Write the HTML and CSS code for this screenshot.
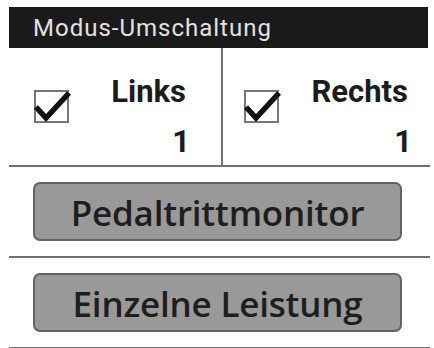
FILE: index.html
```html
<!DOCTYPE html>
<html lang="de">
<head>
<meta charset="utf-8">
<title>Modus-Umschaltung</title>
<link rel="stylesheet" href="styles.css">
</head>
<body>
<div class="screen">
  <div class="header">Modus-Umschaltung</div>
  <div class="sides">
    <div class="side side-left">
      <svg class="check" width="42" height="40" viewBox="0 0 42 40" aria-hidden="true">
        <rect x="2" y="3" width="33" height="31" fill="none" stroke="#777" stroke-width="2"/>
        <path d="M3 19 L13 30 L36 5" fill="none" stroke="#111" stroke-width="5.5" stroke-linejoin="miter"/>
      </svg>
      <div class="texts">
        <div class="label">Links</div>
        <div class="num">1</div>
      </div>
    </div>
    <div class="divider"></div>
    <div class="side side-right">
      <svg class="check" width="42" height="40" viewBox="0 0 42 40" aria-hidden="true">
        <rect x="2" y="3" width="33" height="31" fill="none" stroke="#777" stroke-width="2"/>
        <path d="M3 19 L13 30 L36 5" fill="none" stroke="#111" stroke-width="5.5" stroke-linejoin="miter"/>
      </svg>
      <div class="texts">
        <div class="label">Rechts</div>
        <div class="num">1</div>
      </div>
    </div>
  </div>
  <div class="btn-row"><div class="btn">Pedaltrittmonitor</div></div>
  <div class="btn-row"><div class="btn">Einzelne Leistung</div></div>
</div>
</body>
</html>
```
FILE: styles.css
```css
html, body {
  margin: 0;
  padding: 0;
  background: #ffffff;
}
.screen {
  width: 421px;
  margin-left: 9px;
  padding-top: 7px;
}
.header {
  width: 419px;
  height: 41px;
  box-sizing: border-box;
  padding-left: 24px;
  padding-top: 9px;
  background: #1b1a1a;
  color: #e2e2e2;
  font-family: Roboto, "Liberation Sans", sans-serif;
  font-weight: 400;
  font-size: 24px;
  line-height: 24px;
  letter-spacing: 1px;
}
.sides {
  display: flex;
  height: 117px;
  border-bottom: 2px solid #707070;
}
.side {
  display: flex;
  align-items: center;
  box-sizing: border-box;
}
.side-left {
  width: 212px;
  padding-left: 24px;
  padding-right: 31px;
}
.side-right {
  flex: 1;
  padding-left: 20px;
  padding-right: 18px;
}
.divider {
  width: 2px;
  background: #737373;
}
.check {
  display: block;
  flex: none;
  margin-top: 2px;
}
.texts {
  flex: 1;
  align-self: stretch;
  display: flex;
  flex-direction: column;
  align-items: flex-end;
  padding-top: 28px;
  gap: 19px;
  font-family: Roboto, "Liberation Sans", sans-serif;
  font-weight: bold;
  font-size: 31px;
  line-height: 31px;
  color: #1c1c1c;
}
.label {
  margin-right: 4px;
}
.btn-row {
  padding: 15px 0;
  border-bottom: 2px solid #707070;
}
.btn {
  margin-left: 24px;
  width: 369px;
  height: 59px;
  box-sizing: border-box;
  border: 2px solid #626262;
  border-radius: 7px;
  background: #999999;
  display: flex;
  align-items: center;
  justify-content: center;
  font-family: "Open Sans", "Noto Sans", sans-serif;
  font-weight: 600;
  font-size: 35px;
  letter-spacing: -0.2px;
  color: #1e1e1e;
  padding-top: 2px;
}
```
